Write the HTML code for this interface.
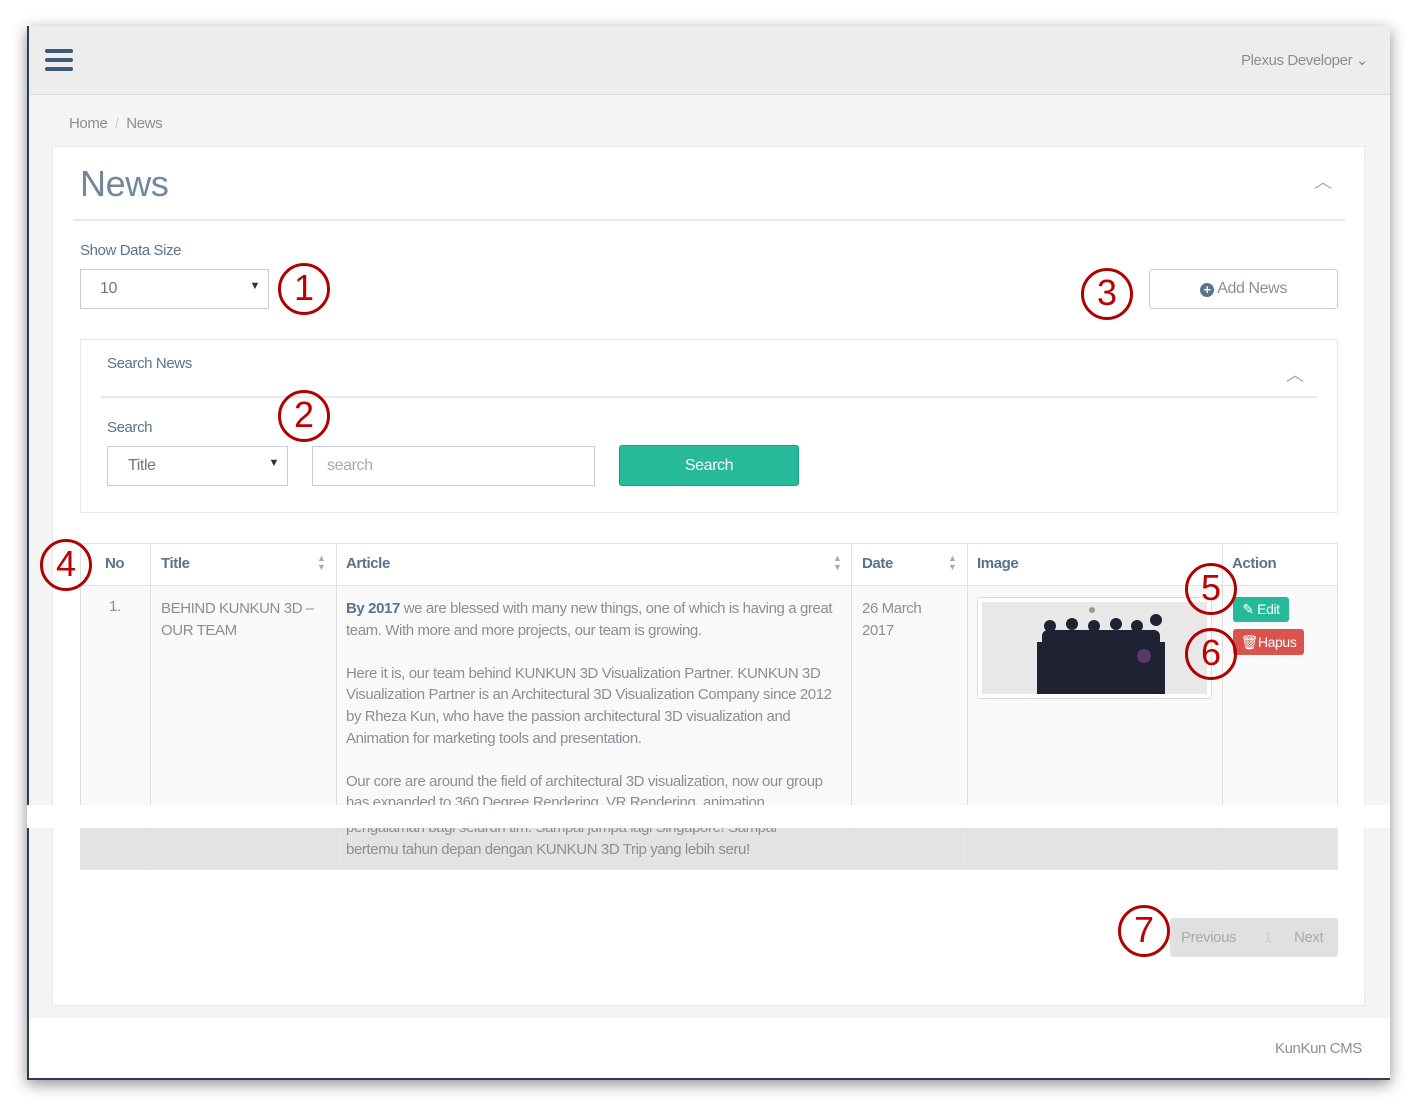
<!DOCTYPE html>
<html><head><meta charset="utf-8"><style>
*{box-sizing:border-box;margin:0;padding:0}
body{width:1415px;height:1106px;background:#fff;position:relative;overflow:hidden;font-family:"Liberation Sans",sans-serif;color:#73879c;letter-spacing:-0.4px}
.a{position:absolute}
.frame{left:27px;top:26px;width:1363px;height:1054px;background:#f4f4f4;box-shadow:0 4px 14px rgba(0,0,0,.45);border-left:2px solid #2a3f54;border-bottom:2px solid #2a3f54}
.circ{position:absolute;width:52px;height:52px;border:3px solid #b00000;border-radius:50%;color:#c00000;font-size:36px;text-align:center;line-height:44px;background:transparent;letter-spacing:0}
.inp{background:#fff;border:1px solid #ccc;font-size:16px}
</style></head><body>
<div class="a frame"></div>
<div class="a" style="left:29px;top:26px;width:1361px;height:69px;background:#ededed;border-bottom:1px solid #d9dee4"></div>
<div class="a" style="left:45px;top:49px;width:28px;height:4px;background:#3f5a78;border-radius:2px"></div>
<div class="a" style="left:45px;top:58px;width:28px;height:4px;background:#3f5a78;border-radius:2px"></div>
<div class="a" style="left:45px;top:67px;width:28px;height:4px;background:#3f5a78;border-radius:2px"></div>
<div class="a" style="left:1241px;top:51px;font-size:15px;color:#8a8f96">Plexus Developer ⌄</div>
<div class="a" style="left:52px;top:103px;width:1313px;height:43px;background:#f5f5f5"></div>
<div class="a" style="left:69px;top:115px;font-size:15px;color:#8a8f96">Home <span style="color:#ccc">&nbsp;/&nbsp;</span> News</div>
<div class="a" style="left:52px;top:146px;width:1313px;height:860px;background:#fff;border:1px solid #e6e9ed"></div>
<div class="a" style="left:80px;top:163px;font-size:36px;color:#73879c;font-weight:300">News</div>
<div class="a" style="left:1314px;top:168px;font-size:18px;color:#aaa">︿</div>
<div class="a" style="left:73px;top:219px;width:1272px;height:2px;background:#e6e9ed"></div>
<div class="a" style="left:80px;top:242px;font-size:15px;color:#5a738e">Show Data Size</div>
<div class="a inp" style="left:80px;top:269px;width:189px;height:40px;padding:10px 19px;color:#777">10<span style="position:absolute;right:8px;top:10px;font-size:11px;color:#333">▼</span></div>
<div class="circ" style="left:278px;top:263px">1</div>
<div class="circ" style="left:1081px;top:268px">3</div>
<div class="a" style="left:1149px;top:269px;width:189px;height:40px;border:1px solid #ccc;border-radius:3px;background:#fff;text-align:center;line-height:38px;font-size:16px;color:#8a8f96"><span style="display:inline-block;width:14px;height:14px;border-radius:50%;background:#5a738e;color:#fff;font-size:13px;line-height:14px;font-weight:bold;vertical-align:-1px">+</span> Add News</div>
<div class="a" style="left:80px;top:339px;width:1258px;height:174px;border:1px solid #e6e9ed;background:#fff"></div>
<div class="a" style="left:107px;top:355px;font-size:15px;color:#5a738e">Search News</div>
<div class="a" style="left:1286px;top:361px;font-size:18px;color:#aaa">︿</div>
<div class="a" style="left:101px;top:396px;width:1216px;height:2px;background:#e6e9ed"></div>
<div class="a" style="left:107px;top:419px;font-size:15px;color:#5a738e">Search</div>
<div class="circ" style="left:278px;top:390px">2</div>
<div class="a inp" style="left:107px;top:446px;width:181px;height:40px;padding:10px 20px;color:#777">Title<span style="position:absolute;right:8px;top:10px;font-size:11px;color:#333">▼</span></div>
<div class="a inp" style="left:312px;top:446px;width:283px;height:40px;padding:10px 14px;color:#aaa">search</div>
<div class="a" style="left:619px;top:445px;width:180px;height:41px;background:#26b99a;border:1px solid #169f85;border-radius:3px;color:#fff;text-align:center;line-height:39px;font-size:16px">Search</div>
<div class="a" style="left:80px;top:543px;width:1258px;height:43px;background:#fff;border:1px solid #e0e0e0"></div>
<div class="a" style="left:80px;top:586px;width:1258px;height:219px;background:#f9f9f9;border-left:1px solid #e0e0e0;border-right:1px solid #e0e0e0"></div>
<div class="a" style="left:80px;top:828px;width:1258px;height:42px;background:#e3e3e3"></div>
<div class="a" style="left:150px;top:543px;width:1px;height:327px;background:#e0e0e0"></div>
<div class="a" style="left:336px;top:543px;width:1px;height:327px;background:#e0e0e0"></div>
<div class="a" style="left:851px;top:543px;width:1px;height:327px;background:#e0e0e0"></div>
<div class="a" style="left:967px;top:543px;width:1px;height:327px;background:#e0e0e0"></div>
<div class="a" style="left:1222px;top:543px;width:1px;height:327px;background:#e0e0e0"></div>
<div class="a" style="left:105px;top:555px;font-size:15px;font-weight:bold;color:#5a738e">No</div>
<div class="a" style="left:161px;top:555px;font-size:15px;font-weight:bold;color:#5a738e">Title</div>
<div class="a" style="left:346px;top:555px;font-size:15px;font-weight:bold;color:#5a738e">Article</div>
<div class="a" style="left:862px;top:555px;font-size:15px;font-weight:bold;color:#5a738e">Date</div>
<div class="a" style="left:977px;top:555px;font-size:15px;font-weight:bold;color:#5a738e">Image</div>
<div class="a" style="left:1232px;top:555px;font-size:15px;font-weight:bold;color:#5a738e">Action</div>
<div class="a" style="left:317px;top:554px;font-size:9px;line-height:9px;color:#aaa">▲<br>▼</div>
<div class="a" style="left:833px;top:554px;font-size:9px;line-height:9px;color:#aaa">▲<br>▼</div>
<div class="a" style="left:948px;top:554px;font-size:9px;line-height:9px;color:#aaa">▲<br>▼</div>
<div class="circ" style="left:40px;top:539px">4</div>
<div class="a" style="left:109px;top:598px;font-size:15px;color:#8a8f96">1.</div>
<div class="a" style="left:161px;top:598px;width:170px;font-size:15px;line-height:22px;color:#8a8f96">BEHIND KUNKUN 3D – OUR TEAM</div>
<div class="a" style="left:346px;top:598px;width:488px;height:207px;overflow:hidden;font-size:15px;line-height:21.6px;color:#8a8f96"><b style="color:#5a738e">By 2017</b> we are blessed with many new things, one of which is having a great team. With more and more projects, our team is growing.<br><br>Here it is, our team behind KUNKUN 3D Visualization Partner. KUNKUN 3D Visualization Partner is an Architectural 3D Visualization Company since 2012 by Rheza Kun, who have the passion architectural 3D visualization and Animation for marketing tools and presentation.<br><br>Our core are around the field of architectural 3D visualization, now our group has expanded to 360 Degree Rendering, VR Rendering, animation</div>
<div class="a" style="left:346px;top:818px;width:500px;height:46px;overflow:hidden;font-size:15px;line-height:21.6px;color:#8a8f96"><div style="margin-top:-1px">pengalaman bagi seluruh tim. Sampai jumpa lagi Singapore! Sampai<br>bertemu tahun depan dengan KUNKUN 3D Trip yang lebih seru!</div></div>
<div class="a" style="left:27px;top:805px;width:1363px;height:23px;background:#fff"></div>
<div class="a" style="left:862px;top:598px;font-size:15px;line-height:22px;color:#8a8f96">26 March<br>2017</div>
<div class="a" style="left:977px;top:597px;width:235px;height:102px;border:1px solid #ddd;border-radius:3px;background:#fff;padding:4px">
<svg width="225" height="92" viewBox="0 0 225 92"><rect width="225" height="92" fill="#e9e7e7"/>
<g fill="#1e2233"><rect x="55" y="40" width="128" height="52"/>
<rect x="60" y="28" width="118" height="20" rx="6"/>
<circle cx="68" cy="24" r="6"/><circle cx="90" cy="22" r="6"/><circle cx="112" cy="24" r="6"/><circle cx="134" cy="22" r="6"/><circle cx="155" cy="24" r="6"/><circle cx="174" cy="18" r="6"/>
<circle cx="66" cy="52" r="7"/><circle cx="88" cy="54" r="7"/><circle cx="116" cy="50" r="7"/><circle cx="142" cy="54" r="7"/></g>
<circle cx="162" cy="54" r="7" fill="#5a3a6a"/>
<circle cx="110" cy="8" r="3" fill="#999"/></svg></div>
<div class="a" style="left:1233px;top:597px;width:56px;height:25px;background:#26b99a;border-radius:3px;color:#fff;font-size:14px;line-height:25px;text-align:center">✎ Edit</div>
<div class="a" style="left:1233px;top:629px;width:71px;height:26px;background:#d9534f;border-radius:3px;color:#fff;font-size:14px;line-height:26px;text-align:center">🗑Hapus</div>
<div class="circ" style="left:1185px;top:563px">5</div>
<div class="circ" style="left:1185px;top:628px">6</div>
<div class="a" style="left:1170px;top:918px;width:168px;height:39px;background:#e0e0e0;border-radius:3px;font-size:15px;color:#aaa;line-height:39px"><span style="position:absolute;left:11px">Previous</span><span style="position:absolute;left:94px;color:#ccc">1</span><span style="position:absolute;left:124px">Next</span></div>
<div class="circ" style="left:1118px;top:905px">7</div>
<div class="a" style="left:29px;top:1018px;width:1361px;height:60px;background:#fff"></div>
<div class="a" style="left:1275px;top:1040px;font-size:15px;color:#8a8f96">KunKun CMS</div>
</body></html>
